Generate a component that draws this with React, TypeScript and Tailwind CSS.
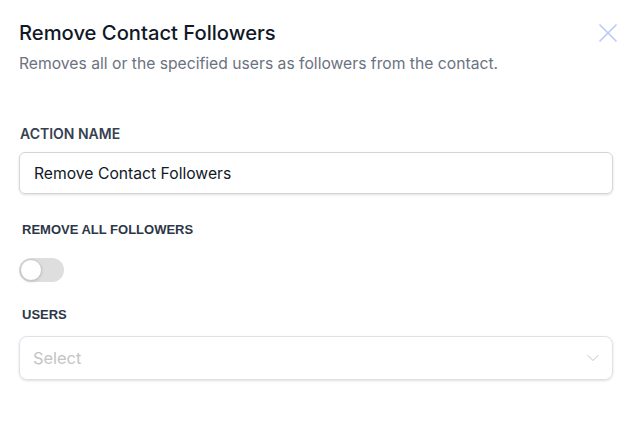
import { X, ChevronDown } from "lucide-react";

export default function App() {
  return (
    <div className="relative w-[638px] h-[447px] bg-white pl-[19px] pr-[25px] pt-[19px] font-['Inter','Noto_Sans',sans-serif]">
      <button className="absolute right-[14px] top-[17px] text-[#bcc6f7]">
        <X size={32} strokeWidth={1.25} />
      </button>

      <h1 className="text-[20.2px] leading-[28px] font-medium text-[#111827]">Remove Contact Followers</h1>
      <p className="mt-[6px] text-[15.7px] leading-[22px] text-[#6b7280]">
        Removes all or the specified users as followers from the contact.
      </p>

      <label className="mt-[50px] block pl-px text-[14px] leading-[18px] font-semibold text-[#374151]">ACTION NAME</label>
      <input
        defaultValue="Remove Contact Followers"
        className="mt-[9px] block w-full h-[42px] rounded-md border border-[#d4d4dc] px-[14px] text-[15.7px] text-[#111827] shadow-sm focus:outline-none"
      />

      <div className="mt-[27px] pl-[3px] text-[13px] leading-[18px] font-bold text-[#2d3748] font-['Liberation_Sans',Arial,sans-serif]">
        REMOVE ALL FOLLOWERS
      </div>
      <div className="mt-[19px] relative w-[45px] h-[24px] rounded-full bg-[#dedede]">
        <span className="absolute left-px top-px h-[22px] w-[22px] rounded-full bg-white border border-[#c8c8c8] shadow-sm" />
      </div>

      <div className="mt-[24px] pl-[3px] text-[13px] leading-[18px] font-bold text-[#2d3748] font-['Liberation_Sans',Arial,sans-serif]">
        USERS
      </div>
      <div className="mt-[12px] flex items-center justify-between h-[44px] rounded-lg border border-[#e1dfe8] pl-[13px] pr-[9px] shadow-sm">
        <span className="text-[16.4px] text-[#c4c4c4]">Select</span>
        <ChevronDown size={20} strokeWidth={1.2} className="text-[#c2c2c2]" />
      </div>
    </div>
  );
}
